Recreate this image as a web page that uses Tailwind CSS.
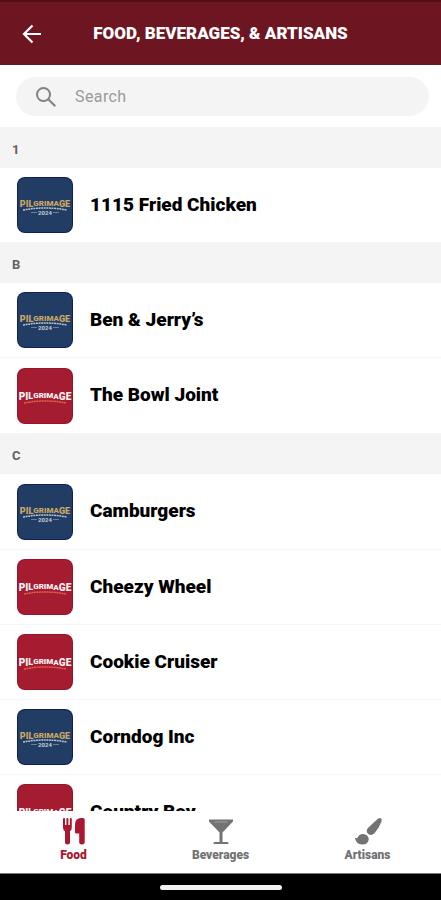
<!DOCTYPE html>
<html lang="en">
<head>
<meta charset="utf-8">
<meta name="viewport" content="width=device-width, initial-scale=1">
<title>Food, Beverages, &amp; Artisans</title>
<script src="https://cdn.jsdelivr.net/npm/@tailwindcss/browser@4"></script>
</head>
<body class="flex h-screen flex-col overflow-hidden bg-white font-['Roboto','Liberation_Sans',sans-serif] text-black">
<svg class="hidden" aria-hidden="true">
  <symbol id="logo-blue" viewBox="0 0 56 56">
    <rect width="56" height="56" rx="8" fill="#101f5c"/>
    <rect x="1" y="1" width="54" height="54" rx="7" fill="#213d63"/>
    <text x="28" y="30" text-anchor="middle" font-weight="900" fill="#c9a665"><tspan font-size="9">PIL</tspan><tspan font-size="8" dy="-1">GRIM</tspan><tspan font-size="8">A</tspan><tspan font-size="9" dy="1">GE</tspan></text>
    <path d="M6 33Q28 29 50 33" fill="none" stroke="#b9c3cf" stroke-width="1.500" stroke-dasharray="2 .6"/>
    <path d="M14 35.500h6M36 35.500h6" stroke="#8292a8" stroke-width=".8"/>
    <text x="28" y="38" text-anchor="middle" font-size="6" font-weight="bold" fill="#c5ced8">2024</text>
  </symbol>
  <symbol id="logo-red" viewBox="0 0 56 56">
    <rect width="56" height="56" rx="8" fill="#98122a"/>
    <rect x="1" y="1" width="54" height="54" rx="7" fill="#a51b30"/>
    <text x="28" y="32" text-anchor="middle" font-weight="900" fill="#fff1f1"><tspan font-size="10">PI</tspan><tspan font-size="9" dy="-1">L</tspan><tspan font-size="8" dy="-1">GRIM</tspan><tspan font-size="8" dy="1">A</tspan><tspan font-size="10" dy="1">GE</tspan></text>
    <path d="M7 35Q28 31 49 35" fill="none" stroke="#df604c" stroke-width="1.500" stroke-dasharray="2 .5"/>
  </symbol>
</svg>

<header class="grid h-[65px] shrink-0 grid-cols-[64px_1fr_64px] items-center border-t-2 border-[#530f19] bg-[#6d1622] text-white">
  <button type="button" aria-label="Back" class="flex h-14 items-center justify-center">
    <svg class="size-6" viewBox="0 0 24 24" fill="none" stroke="currentColor" stroke-width="2.200"><path d="M21 12H4.500M12.500 3.500L4 12l8.500 8.500"/></svg>
  </button>
  <h1 class="text-center text-[17px] font-black whitespace-nowrap">FOOD, BEVERAGES, &amp; ARTISANS</h1>
</header>

<form class="shrink-0 pt-3 pr-3 pb-[11px] pl-4" role="search">
  <div class="flex h-[39px] items-center gap-[19px] rounded-full bg-[#f4f4f4] pl-5">
    <label for="search" aria-label="Search">
      <svg class="size-5 text-[#828282]" viewBox="0 0 20 20" fill="none" stroke="currentColor" stroke-width="2"><circle cx="7.500" cy="7.500" r="6.500"/><path d="M12.300 12.300L19.300 19.300"/></svg>
    </label>
    <input id="search" type="text" placeholder="Search" class="min-w-0 flex-1 bg-transparent text-base tracking-wide outline-none placeholder:text-[#9a9a9a]">
  </div>
</form>

<main class="min-h-0 flex-1 overflow-hidden">
  <section>
    <h2 class="flex h-[41px] items-center bg-[#f4f4f4] px-3 pt-1 text-[13px] font-bold text-[#626262]">1</h2>
    <ul>
      <li><a href="#" class="flex h-[74px] items-center gap-[17px] px-[17px]"><svg class="size-14" aria-hidden="true"><use href="#logo-blue"/></svg><span class="text-[19px] font-black">1115 Fried Chicken</span></a></li>
    </ul>
  </section>
  <section>
    <h2 class="flex h-[41px] items-center bg-[#f4f4f4] px-3 pt-1 text-[13px] font-bold text-[#626262]">B</h2>
    <ul class="divide-y divide-[#f6f6f6]">
      <li><a href="#" class="flex h-[74px] items-center gap-[17px] px-[17px]"><svg class="size-14" aria-hidden="true"><use href="#logo-blue"/></svg><span class="text-[19px] font-black">Ben &amp; Jerry’s</span></a></li>
      <li><a href="#" class="flex h-[75px] items-center gap-[17px] px-[17px]"><svg class="size-14" aria-hidden="true"><use href="#logo-red"/></svg><span class="text-[19px] font-black">The Bowl Joint</span></a></li>
    </ul>
  </section>
  <section>
    <h2 class="flex h-[41px] items-center bg-[#f4f4f4] px-3 pt-1 text-[13px] font-bold text-[#626262]">C</h2>
    <ul class="divide-y divide-[#f6f6f6]">
      <li><a href="#" class="flex h-[75px] items-center gap-[17px] px-[17px]"><svg class="size-14" aria-hidden="true"><use href="#logo-blue"/></svg><span class="text-[19px] font-black">Camburgers</span></a></li>
      <li><a href="#" class="flex h-[74px] items-center gap-[17px] px-[17px]"><svg class="size-14" aria-hidden="true"><use href="#logo-red"/></svg><span class="text-[19px] font-black">Cheezy Wheel</span></a></li>
      <li><a href="#" class="flex h-[74px] items-center gap-[17px] px-[17px]"><svg class="size-14" aria-hidden="true"><use href="#logo-red"/></svg><span class="text-[19px] font-black">Cookie Cruiser</span></a></li>
      <li><a href="#" class="flex h-[74px] items-center gap-[17px] px-[17px]"><svg class="size-14" aria-hidden="true"><use href="#logo-blue"/></svg><span class="text-[19px] font-black">Corndog Inc</span></a></li>
      <li><a href="#" class="flex h-[74px] items-center gap-[17px] px-[17px]"><svg class="size-14" aria-hidden="true"><use href="#logo-red"/></svg><span class="text-[19px] font-black">Country Boy</span></a></li>
    </ul>
  </section>
</main>

<nav class="grid h-[62px] shrink-0 grid-cols-3 bg-white text-xs font-black text-[#737373]">
  <a href="#" aria-current="page" class="flex flex-col items-center gap-0.5 pt-1.5 text-[#ab1730]">
    <svg class="size-7" viewBox="0 0 28 28" fill="currentColor"><path d="M4 1q1 0 1 1v6h1.400V2q0-1 1-1t1 1v6h1.400V2q0-1 1-1t1 1v8.500q0 2.800-1.800 3.700V25q0 2.500-2.500 2.500T5 25V14.200Q3 13.300 3 10.500V2q0-1 1-1z"/><path d="M21 1h2q1.700 0 1.700 2v22q0 2.500-2.800 2.500-2.700 0-2.700-2.500v-8.500h-3q-1.200 0-1.200-1.300V8Q15 1 21 1z"/></svg>
    Food
  </a>
  <a href="#" class="flex flex-col items-center gap-0.5 pt-1.5">
    <svg class="size-7" viewBox="0 0 28 28" fill="currentColor"><path d="M2 2.500h24v2L15.500 15.500V25h5q1 0 1 2h-15q0-2 1-2h5v-9.500L2 4.500z"/><path d="M7.500 5h13" stroke="#a0a0a0" stroke-width="1"/></svg>
    Beverages
  </a>
  <a href="#" class="flex flex-col items-center gap-0.5 pt-1.5">
    <svg class="size-7" viewBox="0 0 28 28" fill="currentColor"><path d="M27 1.500q1.200 1.300.3 3.500Q25 11.500 20.200 16.500q-2 1.800-4.200 1.300-3.300-1-3.300-4.300 0-1.500 2-3.300Q19.500 5.500 24 1.700q1.800-1.400 3-.2z"/><path d="M.8 20.500q1.200 1.200 2.700.3Q5 17 8.800 17q5.200.2 6 5-.3 5.500-6.800 5.500-6-.3-7.200-7z"/></svg>
    Artisans
  </a>
</nav>
<footer class="flex h-[27px] shrink-0 items-center justify-center border-t border-[#777] bg-black" aria-hidden="true">
  <div class="h-[5px] w-[122px] rounded-full bg-[#f2f2f2]"></div>
</footer>
</body>
</html>
